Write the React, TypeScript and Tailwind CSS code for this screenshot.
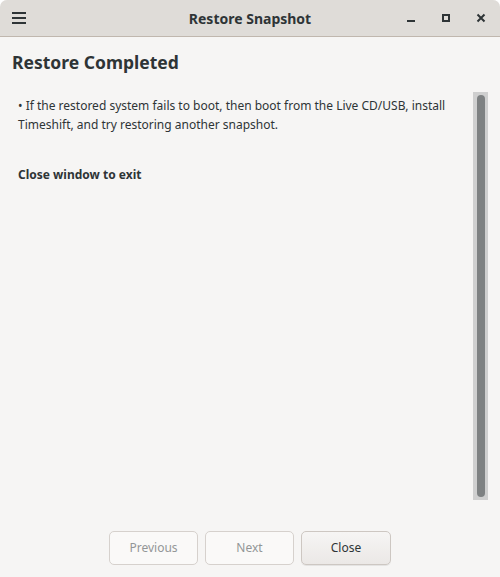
export default function App() {
  return (
    <div
      className="w-[500px] h-[577px] flex flex-col bg-[#f6f5f4] text-[#2e3436] rounded-t-[7px] overflow-hidden"
      style={{ fontFamily: '"Noto Sans", "Open Sans", sans-serif' }}
    >
      {/* header bar */}
      <div className="h-[37px] shrink-0 flex items-center bg-[#dfdcd8] border-b border-[#c0b7ae] relative">
        <div className="w-[37px] flex justify-center">
          <div className="flex flex-col gap-[3px] w-[14px]">
            <span className="h-[2px] bg-[#2e3436]" />
            <span className="h-[2px] bg-[#2e3436]" />
            <span className="h-[2px] bg-[#2e3436]" />
          </div>
        </div>
        <div className="absolute inset-x-0 text-center text-[14px] font-bold pointer-events-none">Restore Snapshot</div>
        <div className="ml-auto flex items-center h-full">
          <div className="w-[35px] h-full flex items-center justify-center">
            <span className="w-[8px] h-[2px] bg-[#2e3436] mt-[6px]" />
          </div>
          <div className="w-[35px] h-full flex items-center justify-center">
            <span className="w-[8px] h-[8px] border-2 border-[#2e3436]" />
          </div>
          <div className="w-[35px] h-full flex items-center justify-center mr-[2px]">
            <svg width="10" height="10" viewBox="0 0 10 10">
              <path d="M1.5 1.5 L8.5 8.5 M8.5 1.5 L1.5 8.5" stroke="#2e3436" strokeWidth="2" />
            </svg>
          </div>
        </div>
      </div>

      <div className="flex-1 flex flex-col px-[12px] pt-[13px] pb-[12px]">
        <h1 className="text-[17.5px] leading-[24px] font-bold">Restore Completed</h1>

        <div className="mt-[18px] flex-1 flex min-h-0">
          <div className="flex-1 pl-[6px] pt-[4px] text-[12px] leading-[19px]">
            <p>• If the restored system fails to boot, then boot from the Live CD/USB, install Timeshift, and try restoring another snapshot.</p>
            <p className="mt-[31px] font-bold">Close window to exit</p>
          </div>
          <div className="w-[15px] bg-[#cfcfcf] flex justify-center py-[3px]">
            <div className="w-[8px] bg-[#7e8182] rounded-full" />
          </div>
        </div>

        <div className="mt-[31px] flex justify-center gap-[7px]">
          <button type="button" disabled
            className="w-[89px] h-[34px] rounded-[5px] border border-[#d6d1cd] bg-[#faf9f8] text-[12px] text-[#939697]">
            Previous
          </button>
          <button type="button" disabled
            className="w-[89px] h-[34px] rounded-[5px] border border-[#d6d1cd] bg-[#faf9f8] text-[12px] text-[#939697]">
            Next
          </button>
          <button type="button"
            className="w-[90px] h-[34px] rounded-[5px] border border-[#cdc7c2] bg-gradient-to-b from-[#f6f5f4] to-[#ebe8e6] text-[12px] text-[#2e3436] shadow-[0_1px_0_rgba(0,0,0,0.07)]">
            Close
          </button>
        </div>
      </div>
    </div>
  )
}
